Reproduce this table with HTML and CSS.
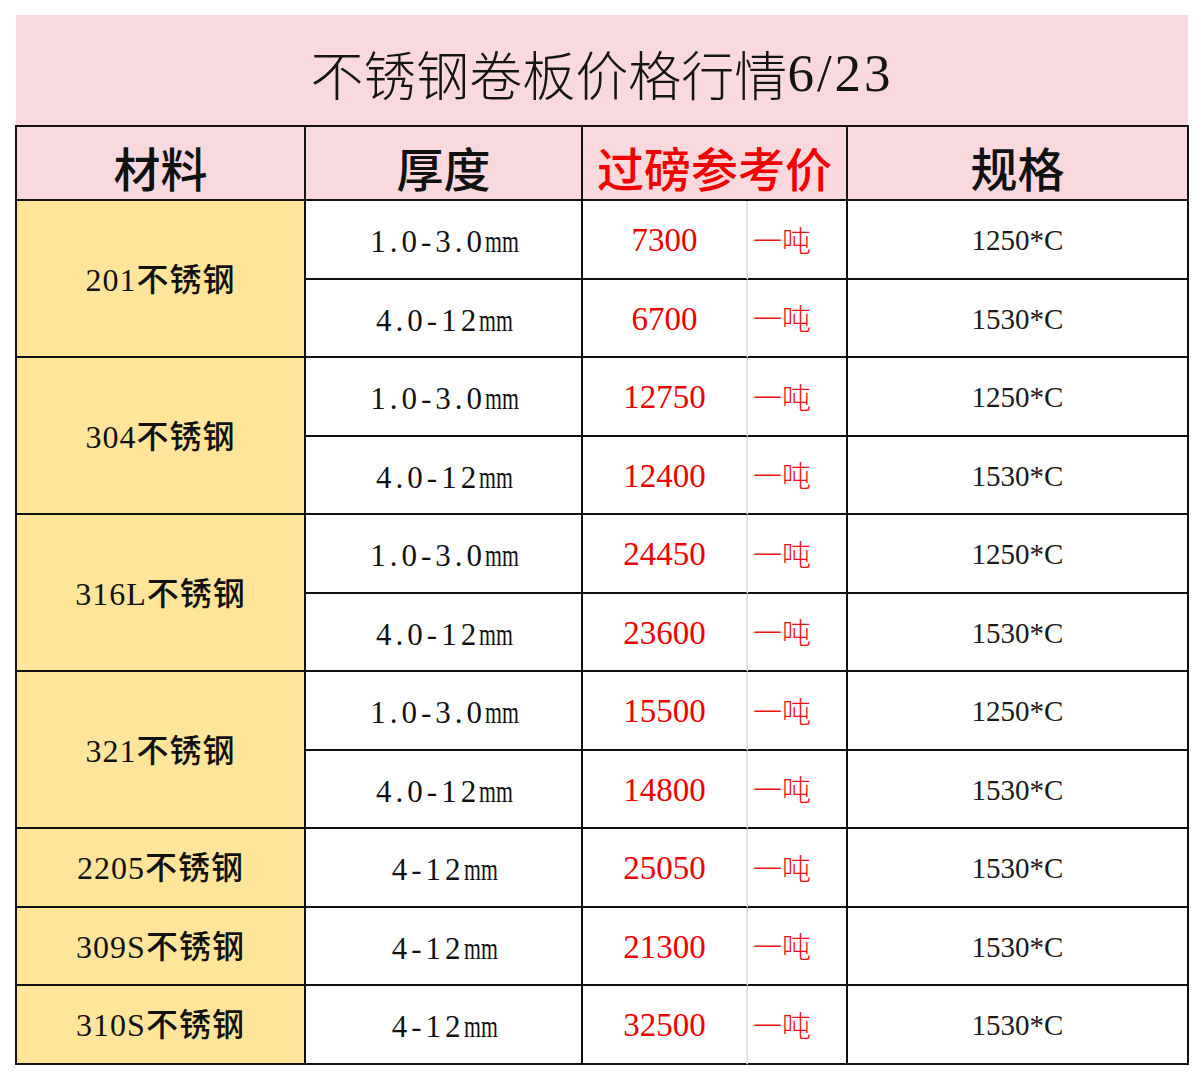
FILE: index.html
```html
<!DOCTYPE html>
<html lang="zh-CN">
<head>
<meta charset="utf-8">
<title>不锈钢卷板价格行情6/23</title>
<link rel="stylesheet" href="styles.css">
</head>
<body>
<div class="sheet">
  <div class="title">不锈钢卷板价格行情<span class="title-num">6/23</span></div>
  <div class="grid">
    <div class="cell head">材料</div>
    <div class="cell head">厚度</div>
    <div class="cell head head-red">过磅参考价</div>
    <div class="cell head">规格</div>

    <div class="cell mat span2">201不锈钢</div>
    <div class="cell thick">1.0-3.0<span class="mm">mm</span></div>
    <div class="cell price">7300</div>
    <div class="cell unit">一吨</div>
    <div class="cell spec">1250*C</div>
    <div class="cell thick">4.0-12<span class="mm">mm</span></div>
    <div class="cell price">6700</div>
    <div class="cell unit">一吨</div>
    <div class="cell spec">1530*C</div>

    <div class="cell mat span2">304不锈钢</div>
    <div class="cell thick">1.0-3.0<span class="mm">mm</span></div>
    <div class="cell price">12750</div>
    <div class="cell unit">一吨</div>
    <div class="cell spec">1250*C</div>
    <div class="cell thick">4.0-12<span class="mm">mm</span></div>
    <div class="cell price">12400</div>
    <div class="cell unit">一吨</div>
    <div class="cell spec">1530*C</div>

    <div class="cell mat span2">316L不锈钢</div>
    <div class="cell thick">1.0-3.0<span class="mm">mm</span></div>
    <div class="cell price">24450</div>
    <div class="cell unit">一吨</div>
    <div class="cell spec">1250*C</div>
    <div class="cell thick">4.0-12<span class="mm">mm</span></div>
    <div class="cell price">23600</div>
    <div class="cell unit">一吨</div>
    <div class="cell spec">1530*C</div>

    <div class="cell mat span2">321不锈钢</div>
    <div class="cell thick">1.0-3.0<span class="mm">mm</span></div>
    <div class="cell price">15500</div>
    <div class="cell unit">一吨</div>
    <div class="cell spec">1250*C</div>
    <div class="cell thick">4.0-12<span class="mm">mm</span></div>
    <div class="cell price">14800</div>
    <div class="cell unit">一吨</div>
    <div class="cell spec">1530*C</div>

    <div class="cell mat">2205不锈钢</div>
    <div class="cell thick">4-12<span class="mm">mm</span></div>
    <div class="cell price">25050</div>
    <div class="cell unit">一吨</div>
    <div class="cell spec">1530*C</div>

    <div class="cell mat">309S不锈钢</div>
    <div class="cell thick">4-12<span class="mm">mm</span></div>
    <div class="cell price">21300</div>
    <div class="cell unit">一吨</div>
    <div class="cell spec">1530*C</div>

    <div class="cell mat">310S不锈钢</div>
    <div class="cell thick">4-12<span class="mm">mm</span></div>
    <div class="cell price">32500</div>
    <div class="cell unit">一吨</div>
    <div class="cell spec">1530*C</div>
  </div>
</div>
</body>
</html>
```

FILE: styles.css
```css
html, body {
  margin: 0;
  padding: 0;
  background: #ffffff;
}

body {
  font-family: "Liberation Serif", "Noto Sans CJK SC", serif;
  color: #111111;
}

.sheet {
  margin: 15px 0 0 15px;
  width: 1174px;
}

.title {
  margin: 0 1px;
  height: 110px;
  background: #fad9de;
  display: flex;
  align-items: center;
  justify-content: center;
  font-family: "Noto Sans CJK SC", serif;
  font-weight: 300;
  font-size: 53px;
  line-height: 1;
  padding-top: 6px;
  box-sizing: border-box;
  color: #141414;
}

.title-num {
  font-family: "Liberation Serif", serif;
  letter-spacing: 3px;
}

.grid {
  display: grid;
  grid-template-columns: 289px 277px 165px 100px 341px;
  grid-template-rows: 74px repeat(11, 78.5px);
  border-top: 2px solid #111111;
  border-left: 2px solid #111111;
  background: #ffffff;
}

.cell {
  box-sizing: border-box;
  border-right: 2px solid #111111;
  border-bottom: 2px solid #111111;
  display: flex;
  align-items: center;
  justify-content: center;
  line-height: 1;
  white-space: nowrap;
}

.head {
  background: #fad9de;
  font-family: "Noto Sans CJK SC", serif;
  font-weight: 500;
  font-size: 47px;
  padding-top: 6px;
}

.head-red {
  grid-column: span 2;
  color: #f00000;
}

.mat {
  background: #ffe59a;
  font-size: 32px;
  font-weight: 500;
  letter-spacing: 1px;
  padding-top: 2px;
}

.span2 {
  grid-row: span 2;
}

.thick {
  font-family: "Liberation Serif", "Noto Sans CJK SC", serif;
  font-size: 31px;
  letter-spacing: 4px;
  padding-top: 5px;
  padding-left: 2px;
}

.mm {
  display: inline-block;
  letter-spacing: 0;
  transform: scaleX(0.7);
  transform-origin: left center;
  margin-right: -14.5px;
  margin-left: -1px;
}

.price {
  color: #ee0000;
  font-size: 33px;
  border-right: 2px solid #e4e4e4;
  padding-top: 3px;
}

.unit {
  justify-content: flex-start;
  padding-left: 5px;
  color: #ee1111;
  font-family: "Noto Sans CJK SC", serif;
  font-weight: 300;
  font-size: 29px;
}

.spec {
  font-size: 29px;
  padding-top: 3px;
  color: #1a1a1a;
}
```
